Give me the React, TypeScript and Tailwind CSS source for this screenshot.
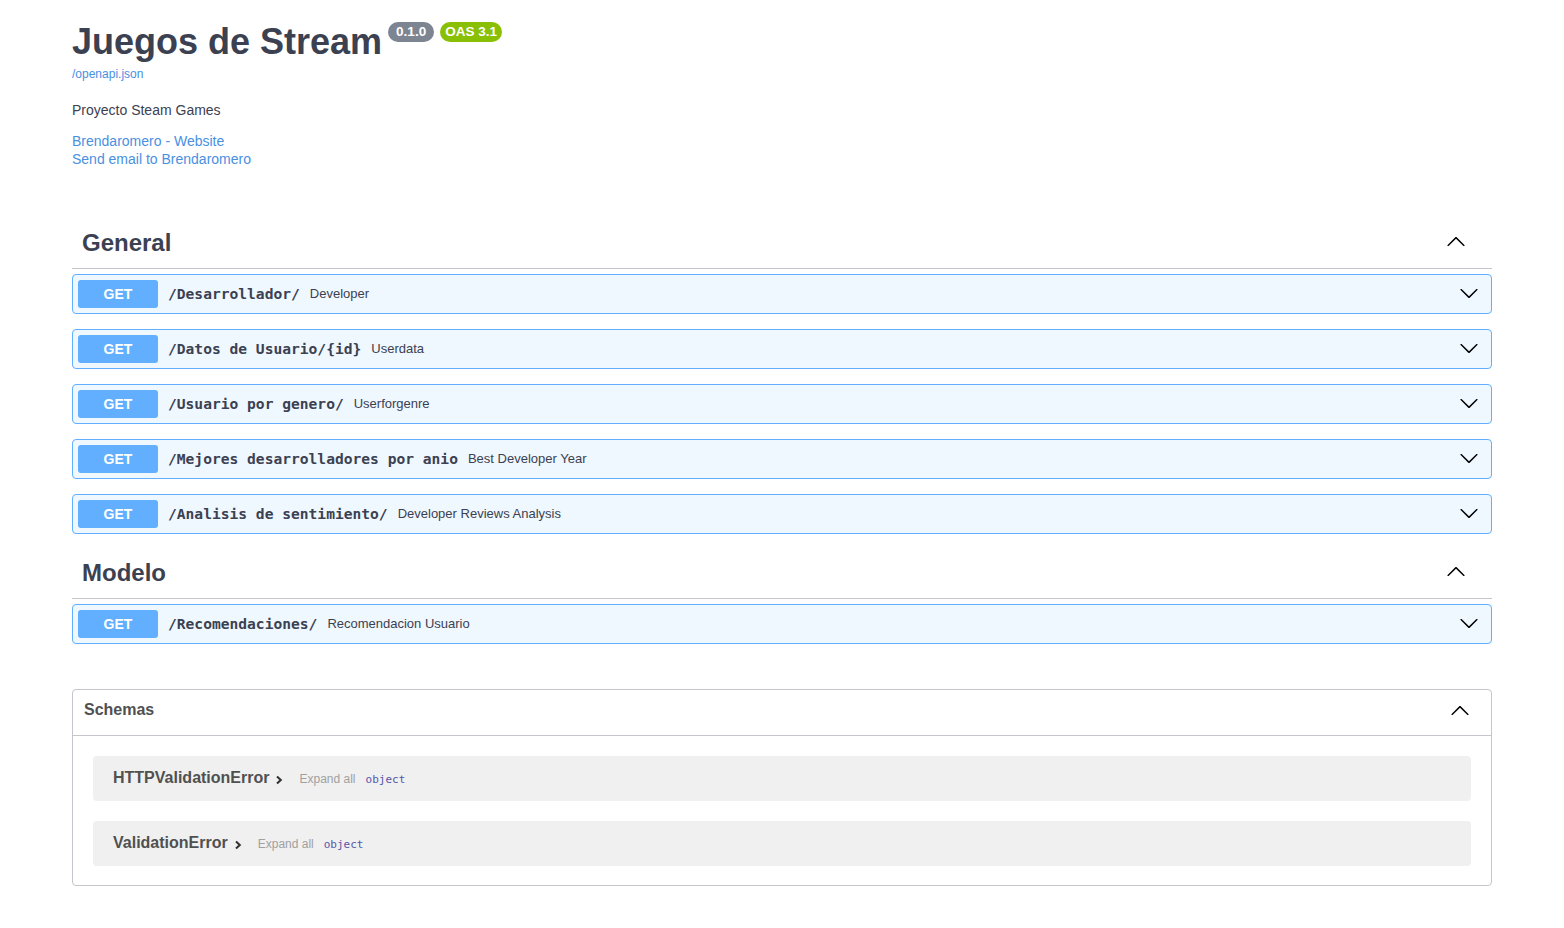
import React from "react";

const ChevronDown = () => (
  <svg width="20" height="20" viewBox="0 0 20 20" className="shrink-0 mb-[2px]" fill="#000">
    <path d="M17.418 6.109c.272-.268.709-.268.979 0s.271.701 0 .969l-7.908 7.83c-.27.268-.707.268-.979 0l-7.908-7.830c-.27-.268-.27-.701 0-.969.271-.268.709-.268.979 0L10 13.25l7.418-7.141z" />
  </svg>
);

const ChevronUp = ({ cls }: { cls: string }) => (
  <svg width="20" height="20" viewBox="0 0 20 20" className={`shrink-0 ${cls}`} fill="#000">
    <path d="M17.418 14.908c.272.268.709.268.979 0s.271-.701 0-.969l-7.908-7.83c-.27-.268-.707-.268-.979 0l-7.908 7.83c-.27.268-.27.701 0 .969.271.268.709.268.979 0L10 7.767l7.418 7.141z" />
  </svg>
);

const ChevronRight = () => (
  <svg width="10" height="10" viewBox="0 0 10 10" className="shrink-0">
    <path d="M3 1.5 L6.8 5 L3 8.5" fill="none" stroke="#303030" strokeWidth="2" />
  </svg>
);

const sans = "font-['Liberation_Sans',Arial,sans-serif]";
const mono = "font-['DejaVu_Sans_Mono','Liberation_Mono',monospace]";

function Op({ path, summary }: { path: string; summary: string }) {
  return (
    <div className="mb-[15px] flex h-[40px] items-center rounded-[4px] border border-[#61affe] bg-[#eff7ff] pl-[5px] pr-[12px]">
      <div className="flex h-[28px] w-[80px] items-center justify-center rounded-[3px] bg-[#61affe] text-[14px] font-bold text-white">
        GET
      </div>
      <span className={`${mono} ml-[10px] text-[14.6px] font-bold text-[#3b4151]`}>{path}</span>
      <span className="ml-[10px] flex-1 text-[13px] text-[#3b4151]">{summary}</span>
      <ChevronDown />
    </div>
  );
}

function Tag({ name }: { name: string }) {
  return (
    <div className="mb-[5px] flex h-[50px] items-center border-b border-[#c4c6cb] pl-[10px] pr-[26px]">
      <h3 className="mb-[1px] flex-1 text-[24px] font-bold text-[#3b4151]">{name}</h3>
      <ChevronUp cls="mb-[6px]" />
    </div>
  );
}

function Model({ name }: { name: string }) {
  return (
    <div className="mx-[20px] flex h-[45px] items-center rounded-[4px] bg-[#f0f0f0] px-[20px]">
      <span className="mb-[2px] text-[16px] font-bold text-[#505050]">{name}</span>
      <span className="ml-[5px] mt-[3px]">
        <ChevronRight />
      </span>
      <span className="ml-[15px] text-[12px] text-[#a0a0a0]">Expand all</span>
      <span className={`${mono} ml-[10px] mt-[3px] text-[11px] text-[#55a]`}>object</span>
    </div>
  );
}

export default function App() {
  return (
    <div className={`${sans} min-h-[928px] bg-white text-[#3b4151]`}>
      <div className="mx-auto w-[1420px] pt-[22px]">
        <div className="flex items-start">
          <h2 className="text-[36px] font-bold leading-[40px] text-[#3b4151]">Juegos de Stream</h2>
          <span className="ml-[6px] flex h-[20px] w-[46px] items-center justify-center rounded-full bg-[#7d8492] text-[13.5px] font-bold text-white">
            0.1.0
          </span>
          <span className="ml-[6px] flex h-[20px] w-[62px] items-center justify-center rounded-full bg-[#89bf04] text-[13.5px] font-bold text-white">
            OAS 3.1
          </span>
        </div>
        <div className="mt-[5px] text-[12px] leading-[14px] text-[#4990e2]">/openapi.json</div>
        <div className="mt-[19px] text-[14px] leading-[20px] text-[#3b4151]">Proyecto Steam Games</div>
        <div className="mt-[12px] text-[14px] leading-[18px] text-[#4990e2]">
          <div>Brendaromero - Website</div>
          <div>Send email to Brendaromero</div>
        </div>

        <div className="mt-[51px]">
          <Tag name="General" />
          <Op path="/Desarrollador/" summary="Developer" />
          <Op path="/Datos de Usuario/{id}" summary="Userdata" />
          <Op path="/Usuario por genero/" summary="Userforgenre" />
          <Op path="/Mejores desarrolladores por anio" summary="Best Developer Year" />
          <Op path="/Analisis de sentimiento/" summary="Developer Reviews Analysis" />
        </div>
        <div>
          <Tag name="Modelo" />
          <Op path="/Recomendaciones/" summary="Recomendacion Usuario" />
        </div>

        <div className="mt-[45px] rounded-[4px] border border-[#c4c6cb] pb-[19px]">
          <div className="flex h-[46px] items-center border-b border-[#c4c6cb] pl-[11px] pr-[21px]">
            <h4 className="mb-[6px] flex-1 text-[16px] font-bold text-[#505050]">Schemas</h4>
            <ChevronUp cls="mb-[5px]" />
          </div>
          <div className="mt-[20px] flex flex-col gap-[20px]">
            <Model name="HTTPValidationError" />
            <Model name="ValidationError" />
          </div>
        </div>
      </div>
    </div>
  );
}
